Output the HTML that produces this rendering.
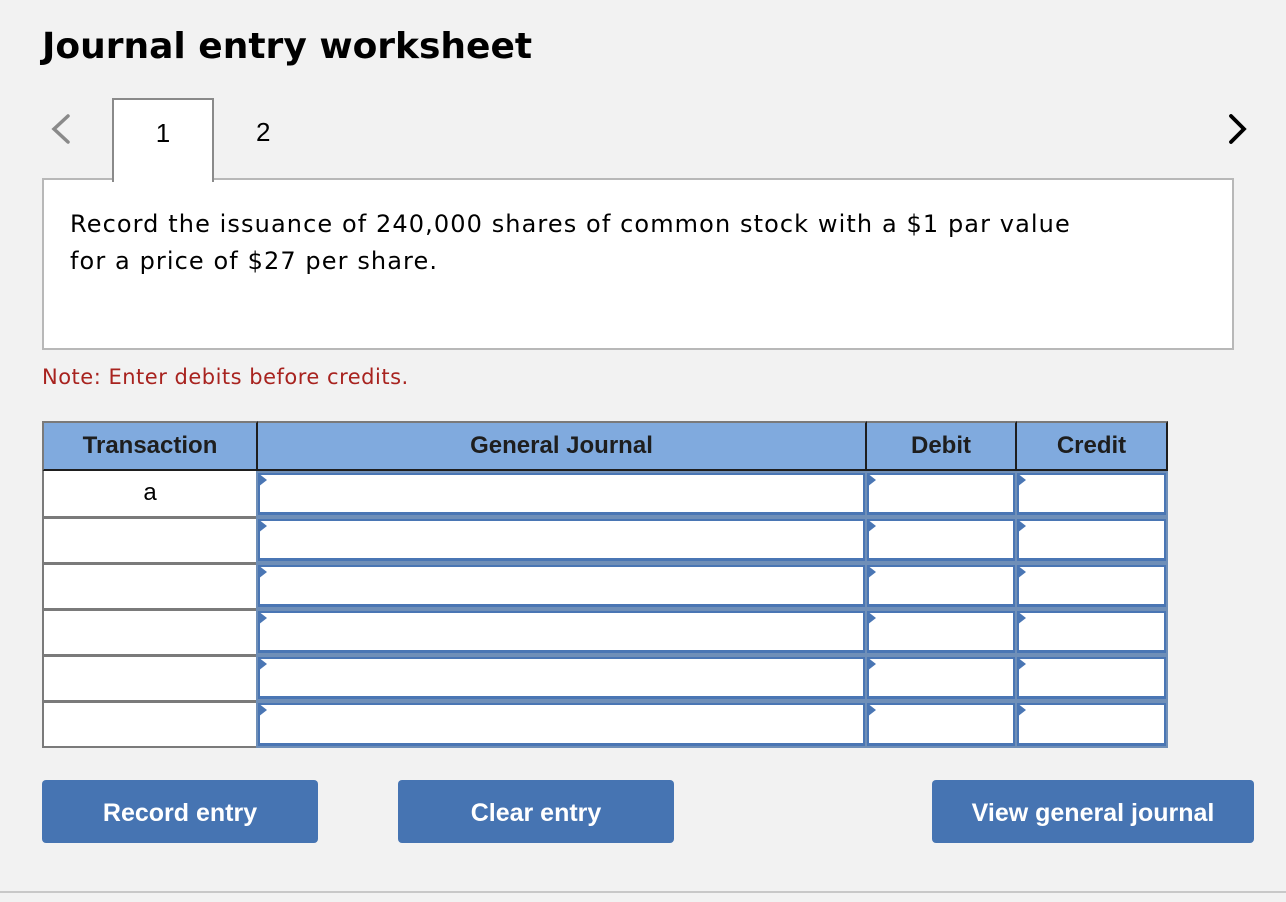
<!DOCTYPE html>
<html><head><meta charset="utf-8"><style>
*{margin:0;padding:0;box-sizing:border-box}
body{width:1286px;height:902px;background:#f2f2f2;position:relative;overflow:hidden;font-family:"DejaVu Sans","Liberation Sans",sans-serif}
.a{position:absolute}
h1{position:absolute;left:42px;top:26px;font-size:36px;font-weight:bold;color:#000;letter-spacing:0px}
.tab{left:112px;top:98px;width:102px;height:84px;background:#fff;border:2px solid #8a8a8a;border-bottom:none;z-index:2;font-family:"Liberation Sans",sans-serif;font-size:26px;text-align:center;padding-top:18px}
.box{left:42px;top:178px;width:1192px;height:172px;background:#fff;border:2px solid #b8b8b8}
.q{left:70px;top:206px;font-size:24px;letter-spacing:1.1px;line-height:37px;color:#000;white-space:nowrap}
.note{left:42px;top:365px;font-size:21px;letter-spacing:0.5px;color:#a8231f;white-space:nowrap}
.hd{top:421px;height:51px;background:#80aade;border-top:2px solid #7a7a7a;border-bottom:3px solid #1e1e1e;font-family:"Liberation Sans",sans-serif;font-weight:bold;font-size:24px;color:#1e1e1e;text-align:center;line-height:46px}
.tc{left:42px;width:216px;height:47px;background:#fff;border:2px solid #7a7a7a;border-top:none;font-family:"Liberation Sans",sans-serif;font-size:24px;text-align:center;line-height:44px}
.in{height:46px;background:#6f8fb8;}
.in i{position:absolute;left:2px;top:2px;right:2px;bottom:2px;background:#fff;border:2px solid #4a76b4;border-bottom-width:3px}
.in b{position:absolute;left:2px;top:2px;width:0;height:0;border-top:7px solid transparent;border-bottom:7px solid transparent;border-left:9px solid #4a76b4}
.btn{top:780px;height:63px;background:#4674b2;border-radius:4px;color:#fff;font-family:"Liberation Sans",sans-serif;font-weight:bold;font-size:25px;text-align:center;line-height:66px}
</style></head><body>
<h1>Journal entry worksheet</h1>
<svg class="a" style="left:46px;top:113px" width="28" height="32"><path d="M22 3 L8 16 L22 29" stroke="#8a8a8a" stroke-width="3.5" fill="none" stroke-linecap="round"/></svg>
<svg class="a" style="left:1224px;top:111px" width="30" height="36"><path d="M7 5 L20 18 L7 31" stroke="#000" stroke-width="3.8" fill="none" stroke-linecap="round"/></svg>
<div class="a tab">1</div>
<div class="a" style="left:256px;top:117px;font-family:'Liberation Sans',sans-serif;font-size:26px">2</div>
<div class="a box"></div>
<div class="a q">Record the issuance of 240,000 shares of common stock with a $1 par value<br>for a price of $27 per share.</div>
<div class="a note">Note: Enter debits before credits.</div>
<div class="a hd" style="left:42px;width:216px;border-left:2px solid #7a7a7a;border-right:2px solid #1e1e1e">Transaction</div>
<div class="a hd" style="left:258px;width:609px;border-right:2px solid #1e1e1e">General Journal</div>
<div class="a hd" style="left:867px;width:150px;border-right:2px solid #1e1e1e">Debit</div>
<div class="a hd" style="left:1017px;width:151px;border-right:2px solid #1e1e1e">Credit</div>

<div class="a tc" style="top:471px">a</div>
<div class="a tc" style="top:517px;border-top:2px solid #7a7a7a"></div>
<div class="a tc" style="top:563px;border-top:2px solid #7a7a7a"></div>
<div class="a tc" style="top:609px;border-top:2px solid #7a7a7a"></div>
<div class="a tc" style="top:655px;border-top:2px solid #7a7a7a"></div>
<div class="a tc" style="top:701px;border-top:2px solid #7a7a7a"></div>

<div class="a" style="left:256px;top:471px;width:912px;height:277px;background:#7a7a7a"></div>
<div class="a in" style="left:256px;top:471px;width:611px"><i></i><b></b></div><div class="a in" style="left:865px;top:471px;width:152px"><i></i><b></b></div><div class="a in" style="left:1015px;top:471px;width:153px"><i></i><b></b></div>
<div class="a in" style="left:256px;top:517px;width:611px"><i></i><b></b></div><div class="a in" style="left:865px;top:517px;width:152px"><i></i><b></b></div><div class="a in" style="left:1015px;top:517px;width:153px"><i></i><b></b></div>
<div class="a in" style="left:256px;top:563px;width:611px"><i></i><b></b></div><div class="a in" style="left:865px;top:563px;width:152px"><i></i><b></b></div><div class="a in" style="left:1015px;top:563px;width:153px"><i></i><b></b></div>
<div class="a in" style="left:256px;top:609px;width:611px"><i></i><b></b></div><div class="a in" style="left:865px;top:609px;width:152px"><i></i><b></b></div><div class="a in" style="left:1015px;top:609px;width:153px"><i></i><b></b></div>
<div class="a in" style="left:256px;top:655px;width:611px"><i></i><b></b></div><div class="a in" style="left:865px;top:655px;width:152px"><i></i><b></b></div><div class="a in" style="left:1015px;top:655px;width:153px"><i></i><b></b></div>
<div class="a in" style="left:256px;top:701px;width:611px;height:47px"><i></i><b></b></div><div class="a in" style="left:865px;top:701px;width:152px;height:47px"><i></i><b></b></div><div class="a in" style="left:1015px;top:701px;width:153px;height:47px"><i></i><b></b></div>

<div class="a btn" style="left:42px;width:276px">Record entry</div>
<div class="a btn" style="left:398px;width:276px">Clear entry</div>
<div class="a btn" style="left:932px;width:322px">View general journal</div>
<div class="a" style="left:0;top:891px;width:1286px;height:2px;background:#c8c8c8"></div>
</body></html>
